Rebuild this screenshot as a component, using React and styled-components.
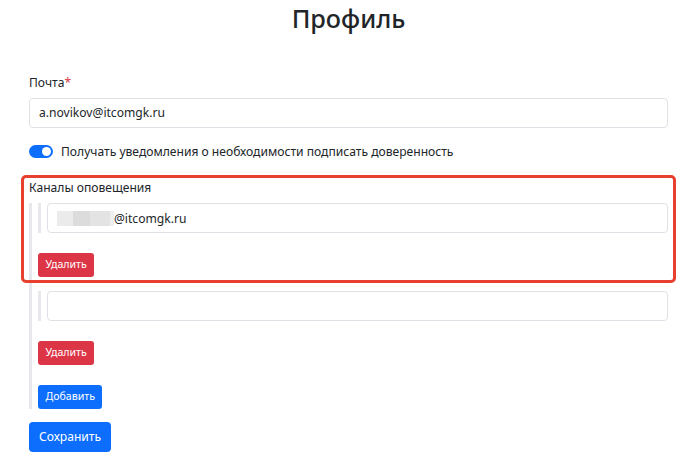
import React from "react";
import styled, { createGlobalStyle } from "styled-components";

const Global = createGlobalStyle`
  html, body { margin: 0; padding: 0; background: #fff; }
  body {
    font-family: "Noto Sans", "Open Sans", sans-serif;
    color: #212529;
    font-size: 12.1px;
    line-height: 19.2px;
  }
  * { box-sizing: border-box; }
`;

const Page = styled.main`
  padding: 3px 24px 0 29px;
`;

const Title = styled.h1`
  margin: 0 0 39px;
  font-size: 25.2px;
  font-weight: 500;
  line-height: 30.7px;
  text-align: center;
`;

const Label = styled.div`
  margin-bottom: 6px;
`;

const Required = styled.span`
  color: #dc3545;
`;

const Field = styled.div`
  height: 30px;
  flex: 1;
  border: 1px solid #dee2e6;
  border-radius: 4px;
  padding: 0 9px;
  display: flex;
  align-items: center;
  background: #fff;
`;

const SwitchRow = styled.div`
  display: flex;
  align-items: center;
  gap: 8px;
  margin-top: 14px;
`;

const Switch = styled.span`
  width: 24px;
  height: 13px;
  border-radius: 7px;
  background: #0d6efd;
  display: flex;
  justify-content: flex-end;
  align-items: center;
  padding: 0 2px;
`;

const Knob = styled.span`
  width: 9px;
  height: 9px;
  border-radius: 50%;
  background: #fff;
`;

const Channels = styled.section`
  position: relative;
  margin-top: 17px;
`;

const Highlight = styled.div`
  position: absolute;
  top: -3px;
  left: -8px;
  right: -8px;
  height: 108px;
  border: 3px solid #e8402f;
  border-radius: 5px;
  pointer-events: none;
`;

const List = styled.div`
  border-left: 3px solid #e6e8eb;
  padding-left: 6px;
  display: flex;
  flex-direction: column;
  align-items: flex-start;
`;

const Item = styled.div`
  width: 100%;
  margin-bottom: 14px;
  display: flex;
  flex-direction: column;
  align-items: flex-start;
`;

const InputRow = styled.div`
  width: 100%;
  display: flex;
  border-left: 3px solid #e6e8eb;
  padding-left: 6px;
  margin-bottom: 20px;
`;

const Blur = styled.span`
  display: inline-flex;
  height: 15px;
`;

const Patch = styled.span`
  width: ${(p) => p.$w}px;
  background: ${(p) => p.$c};
`;

const Button = styled.button`
  font-family: inherit;
  border: none;
  color: #fff;
  background: ${(p) => (p.$danger ? "#dc3545" : "#0d6efd")};
  font-size: ${(p) => (p.$small ? "10.6px" : "12.1px")};
  line-height: 1.5;
  height: ${(p) => (p.$small ? "24px" : "30px")};
  padding: ${(p) => (p.$small ? "0 7.5px" : "0 10px")};
  border-radius: ${(p) => (p.$small ? "3px" : "4px")};
  margin-top: ${(p) => p.$mt || 0}px;
  cursor: pointer;
`;

export default function App() {
  return (
    <>
      <Global />
      <Page>
        <Title>Профиль</Title>
        <Label>
          Почта<Required>*</Required>
        </Label>
        <Field>a.novikov@itcomgk.ru</Field>
        <SwitchRow>
          <Switch>
            <Knob />
          </Switch>
          <span>Получать уведомления о необходимости подписать доверенность</span>
        </SwitchRow>
        <Channels>
          <Label>Каналы оповещения</Label>
          <List>
            <Item>
              <InputRow>
                <Field>
                  <Blur>
                    <Patch $w={16} $c="#ebebeb" />
                    <Patch $w={17} $c="#dcdcdc" />
                    <Patch $w={20} $c="#e3e3e3" />
                    <Patch $w={4} $c="#efefef" />
                  </Blur>
                  @itcomgk.ru
                </Field>
              </InputRow>
              <Button $danger $small>Удалить</Button>
            </Item>
            <Item>
              <InputRow>
                <Field />
              </InputRow>
              <Button $danger $small>Удалить</Button>
            </Item>
            <Button $small $mt={6}>Добавить</Button>
          </List>
          <Highlight />
        </Channels>
        <Button $mt={13}>Сохранить</Button>
      </Page>
    </>
  );
}
